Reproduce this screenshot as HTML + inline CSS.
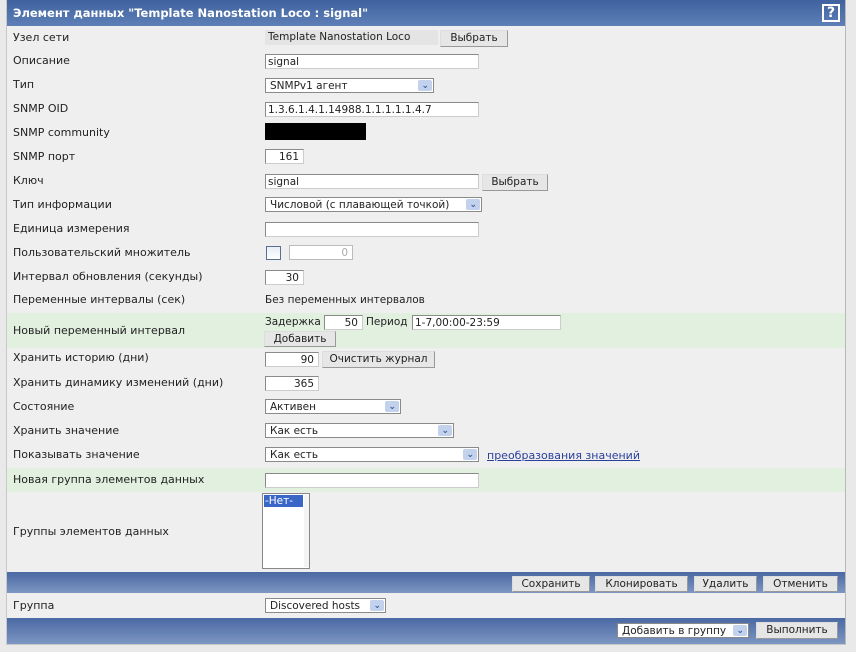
<!DOCTYPE html>
<html><head><meta charset="utf-8"><style>
*{box-sizing:border-box;margin:0;padding:0}
body{width:856px;height:652px;background:#e9e9e9;font-family:"DejaVu Sans","Liberation Sans",sans-serif;font-size:10.5px;color:#222;position:relative;overflow:hidden}
.a{position:absolute}
#frame{left:6px;top:0;width:840px;height:645px;background:#efefef;border-left:1px solid #c8c8c8;border-right:1px solid #b8b8b8;border-bottom:1px solid #c8c8c8}
.bar{left:7px;width:838px;background:linear-gradient(#4a69a3,#7d96c2)}
.lbl{left:13px;font-size:11px;line-height:12px;white-space:nowrap}
.in{background:#fff;border:1px solid #8a8a8a;border-right-color:#ccc;border-bottom-color:#ccc;font-size:10.5px;line-height:14px;padding-left:2px;white-space:nowrap;overflow:hidden}
.r{text-align:right;padding-right:4px}
.btn{background:#e6e6e6;border:1px solid #999;border-top-color:#ddd;border-left-color:#ddd;font-size:10.5px;text-align:center;line-height:15px;white-space:nowrap}
.sel{background:#fff;border:1px solid #8a8a8a;font-size:10.5px;line-height:14px;padding-left:4px;white-space:nowrap}
.sel:after{content:"";position:absolute;right:1px;top:1px;width:14px;height:11px;background:#c2d2ec;border-radius:2px}
.sel i{position:absolute;right:4px;top:0px;font-style:normal;color:#3b5a9a;font-size:9px;z-index:1;font-weight:bold}
.green{left:7px;width:838px;background:#e2f0e0}
</style></head><body>
<div class="a" id="frame"></div>
<div class="a bar" style="top:0;height:26px;background:linear-gradient(#3f62a0,#5e7fb6)"></div>
<div class="a" style="left:13px;top:6px;color:#fff;font-weight:bold;font-size:11.5px">Элемент данных "Template Nanostation Loco : signal"</div>
<div class="a" style="left:822px;top:4px;width:18px;height:18px;border:2px solid #fff;color:#fff;font-weight:bold;font-size:14px;text-align:center;line-height:14px">?</div>

<div class="a green" style="top:313px;height:35px"></div>
<div class="a green" style="top:468px;height:24px"></div>

<div class="a lbl" style="top:32px">Узел сети</div>
<div class="a lbl" style="top:55px">Описание</div>
<div class="a lbl" style="top:79px">Тип</div>
<div class="a lbl" style="top:103px">SNMP OID</div>
<div class="a lbl" style="top:127px">SNMP community</div>
<div class="a lbl" style="top:151px">SNMP порт</div>
<div class="a lbl" style="top:175px">Ключ</div>
<div class="a lbl" style="top:199px">Тип информации</div>
<div class="a lbl" style="top:223px">Единица измерения</div>
<div class="a lbl" style="top:247px">Пользовательский множитель</div>
<div class="a lbl" style="top:271px">Интервал обновления (секунды)</div>
<div class="a lbl" style="top:294px">Переменные интервалы (сек)</div>
<div class="a lbl" style="top:325px">Новый переменный интервал</div>
<div class="a lbl" style="top:352px">Хранить историю (дни)</div>
<div class="a lbl" style="top:377px">Хранить динамику изменений (дни)</div>
<div class="a lbl" style="top:401px">Состояние</div>
<div class="a lbl" style="top:425px">Хранить значение</div>
<div class="a lbl" style="top:449px">Показывать значение</div>
<div class="a lbl" style="top:474px">Новая группа элементов данных</div>
<div class="a lbl" style="top:526px">Группы элементов данных</div>
<div class="a lbl" style="top:600px">Группа</div>

<div class="a" style="left:265px;top:30px;width:173px;height:15px;background:#e4e4e4;padding-left:3px;line-height:15px;white-space:nowrap;overflow:hidden">Template Nanostation Loco</div>
<div class="a btn" style="left:440px;top:30px;width:68px;height:17px">Выбрать</div>
<div class="a in" style="left:265px;top:54px;width:214px;height:15px">signal</div>
<div class="a sel" style="left:265px;top:78px;width:169px;height:15px">SNMPv1 агент<i>⌄</i></div>
<div class="a in" style="left:265px;top:102px;width:214px;height:15px">1.3.6.1.4.1.14988.1.1.1.1.1.4.7</div>
<div class="a" style="left:265px;top:123px;width:101px;height:17px;background:#000"></div>
<div class="a in r" style="left:265px;top:149px;width:39px;height:15px">161</div>
<div class="a in" style="left:265px;top:174px;width:214px;height:15px">signal</div>
<div class="a btn" style="left:482px;top:174px;width:66px;height:17px">Выбрать</div>
<div class="a sel" style="left:265px;top:197px;width:217px;height:15px">Числовой (с плавающей точкой)<i>⌄</i></div>
<div class="a in" style="left:265px;top:222px;width:214px;height:15px"></div>
<div class="a" style="left:266px;top:246px;width:15px;height:14px;border:1px solid #5a6e90;background:linear-gradient(#e8eef6,#fff)"></div>
<div class="a in r" style="left:289px;top:245px;width:64px;height:15px;color:#aaa;border-color:#bbb">0</div>
<div class="a in r" style="left:265px;top:270px;width:39px;height:15px">30</div>
<div class="a" style="left:265px;top:294px">Без переменных интервалов</div>
<div class="a" style="left:265px;top:316px">Задержка</div>
<div class="a in r" style="left:324px;top:315px;width:39px;height:15px">50</div>
<div class="a" style="left:366px;top:316px">Период</div>
<div class="a in" style="left:412px;top:315px;width:149px;height:15px">1-7,00:00-23:59</div>
<div class="a btn" style="left:264px;top:331px;width:72px;height:16px">Добавить</div>
<div class="a in r" style="left:265px;top:352px;width:54px;height:15px">90</div>
<div class="a btn" style="left:322px;top:351px;width:113px;height:17px">Очистить журнал</div>
<div class="a in r" style="left:265px;top:376px;width:54px;height:15px">365</div>
<div class="a sel" style="left:265px;top:399px;width:136px;height:15px">Активен<i>⌄</i></div>
<div class="a sel" style="left:265px;top:423px;width:189px;height:15px">Как есть<i>⌄</i></div>
<div class="a sel" style="left:265px;top:447px;width:214px;height:15px">Как есть<i>⌄</i></div>
<div class="a" style="left:487px;top:449px;color:#2a3f9a;text-decoration:underline;font-size:11px">преобразования значений</div>
<div class="a in" style="left:265px;top:473px;width:214px;height:15px"></div>
<div class="a" style="left:262px;top:493px;width:48px;height:76px;background:#fff;border:1px solid #888"></div>
<div class="a" style="left:264px;top:495px;width:39px;height:12px;background:#3a66c8;color:#fff;line-height:12px;padding-left:1px">-Нет-</div>
<div class="a" style="left:304px;top:495px;width:5px;height:72px;background:#f4f4f4"></div>

<div class="a bar" style="top:572px;height:21px"></div>
<div class="a btn" style="left:512px;top:576px;width:78px;height:16px">Сохранить</div>
<div class="a btn" style="left:595px;top:576px;width:93px;height:16px">Клонировать</div>
<div class="a btn" style="left:694px;top:576px;width:63px;height:16px">Удалить</div>
<div class="a btn" style="left:763px;top:576px;width:75px;height:16px">Отменить</div>
<div class="a sel" style="left:265px;top:598px;width:121px;height:15px">Discovered hosts<i>⌄</i></div>
<div class="a bar" style="top:618px;height:26px"></div>
<div class="a sel" style="left:617px;top:623px;width:132px;height:15px">Добавить в группу<i>⌄</i></div>
<div class="a btn" style="left:756px;top:622px;width:82px;height:17px">Выполнить</div>
</body></html>
